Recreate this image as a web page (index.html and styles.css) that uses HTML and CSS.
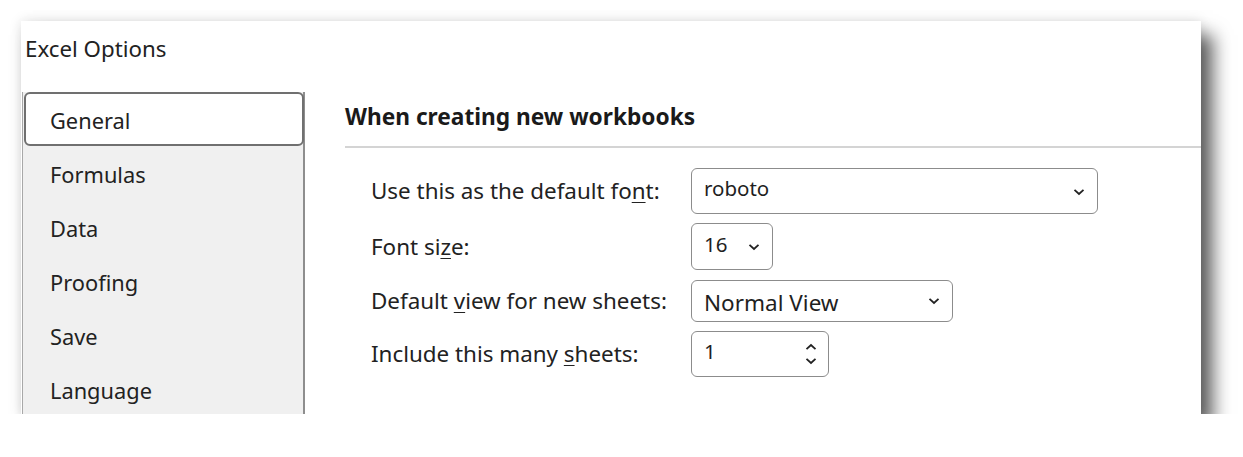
FILE: index.html
```html
<!DOCTYPE html>
<html>
<head>
<meta charset="utf-8">
<title>Excel Options</title>
<link rel="stylesheet" href="styles.css">
</head>
<body>
<div class="window">
  <div class="title">Excel Options</div>
  <div class="body">
    <nav class="sidebar">
      <div class="item active">General</div>
      <div class="item">Formulas</div>
      <div class="item">Data</div>
      <div class="item">Proofing</div>
      <div class="item">Save</div>
      <div class="item">Language</div>
    </nav>
    <main class="main">
      <h2 class="heading">When creating new workbooks</h2>
      <div class="rule"></div>
      <div class="form">
        <div class="row r1">
          <span class="label">Use this as the default fo<u>n</u>t:</span>
          <div class="control select w-font"><span class="val small">roboto</span>
            <svg class="chev" width="12" height="8" viewBox="0 0 12 8"><path d="M1.5 1.8 L6 6 L10.5 1.8" fill="none" stroke="#222" stroke-width="1.8"/></svg>
          </div>
        </div>
        <div class="row r2">
          <span class="label">Font si<u>z</u>e:</span>
          <div class="control select w-size"><span class="val small">16</span>
            <svg class="chev" width="12" height="8" viewBox="0 0 12 8"><path d="M1.5 1.8 L6 6 L10.5 1.8" fill="none" stroke="#222" stroke-width="1.8"/></svg>
          </div>
        </div>
        <div class="row r3">
          <span class="label">Default <u>v</u>iew for new sheets:</span>
          <div class="control select w-view"><span class="val big">Normal View</span>
            <svg class="chev" width="12" height="8" viewBox="0 0 12 8"><path d="M1.5 1.8 L6 6 L10.5 1.8" fill="none" stroke="#222" stroke-width="1.8"/></svg>
          </div>
        </div>
        <div class="row r4">
          <span class="label">Include this many <u>s</u>heets:</span>
          <div class="control w-num"><span class="val small">1</span>
            <div class="spin">
              <svg width="12" height="8" viewBox="0 0 12 8"><path d="M1.5 6.2 L6 2 L10.5 6.2" fill="none" stroke="#222" stroke-width="1.8"/></svg>
              <svg width="12" height="8" viewBox="0 0 12 8"><path d="M1.5 1.8 L6 6 L10.5 1.8" fill="none" stroke="#222" stroke-width="1.8"/></svg>
            </div>
          </div>
        </div>
      </div>
    </main>
  </div>
</div>
</body>
</html>
```

FILE: styles.css
```css
html, body {
  margin: 0;
  background: #ffffff;
}
body {
  padding: 21px 0 0 21px;
  font-family: "Noto Sans", "Open Sans", sans-serif;
  color: #1f1f1f;
}
.window {
  width: 1180px;
  height: 393px;
  background: #ffffff;
  box-shadow: 12px 14px 17px rgba(0,0,0,0.62), 0 0 12px rgba(0,0,0,0.12);
  overflow: hidden;
  display: flex;
  flex-direction: column;
}
.title {
  flex: none;
  font-size: 22.3px;
  line-height: 28px;
  padding: 14px 0 0 4px;
  height: 58px;
  box-sizing: border-box;
  color: #222;
}
.body {
  flex: 1;
  min-height: 0;
  overflow: hidden;
  display: flex;
  margin-top: 13px;
}
.sidebar {
  width: 280px;
  margin-left: 1px;
  background: #f0f0f0;
  border-left: 1px solid #a8a8a8;
  border-right: 2px solid #8e8e8e;
  display: flex;
  flex-direction: column;
}
.item {
  flex: none;
  height: 54px;
  line-height: 56px;
  padding-left: 27px;
  font-size: 21.8px;
  color: #222;
  box-sizing: border-box;
}
.item + .item {
  line-height: 57px;
}
.item.active {
  background: #ffffff;
  border: 2px solid #707070;
  border-radius: 6px;
  margin-left: 1px;
  margin-right: -1px;
  line-height: 54px;
  padding-left: 24px;
}
.main {
  flex: 1;
  padding-left: 40px;
}
.heading {
  margin: 0;
  font-size: 22.7px;
  font-weight: bold;
  line-height: 28px;
  padding-top: 11px;
  color: #1a1a1a;
}
.rule {
  height: 2px;
  background: #d4d4d4;
  margin-top: 15px;
}
.form {
  display: flex;
  flex-direction: column;
  padding-top: 20px;
  gap: 9px;
}
.row {
  display: grid;
  grid-template-columns: 320px auto;
  align-items: center;
  padding-left: 26px;
}
.r3 { margin-top: 1px; }
.label {
  font-size: 22.4px;
  line-height: 28px;
  color: #222;
}
.label u {
  text-underline-offset: 3px;
  text-decoration-thickness: 1px;
}
.control {
  box-sizing: border-box;
  border: 1.5px solid #8c8c8c;
  border-radius: 6px;
  display: flex;
  align-items: center;
  justify-content: space-between;
  padding: 0 12px 0 12px;
  background: #fff;
}
.w-font { width: 407px; height: 46px; }
.w-size { width: 82px; height: 47px; }
.w-view { width: 262px; height: 42px; }
.w-num { width: 138px; height: 46px; }
.val.small {
  font-size: 20.5px;
  margin-top: -6px;
}
.val.big {
  font-size: 22.5px;
  margin-top: 2px;
}
.chev {
  display: block;
}
.w-font .chev { margin-top: 1px; }
.spin {
  display: flex;
  flex-direction: column;
  gap: 6px;
  margin-right: -1px;
}
.spin svg { display: block; }
```
